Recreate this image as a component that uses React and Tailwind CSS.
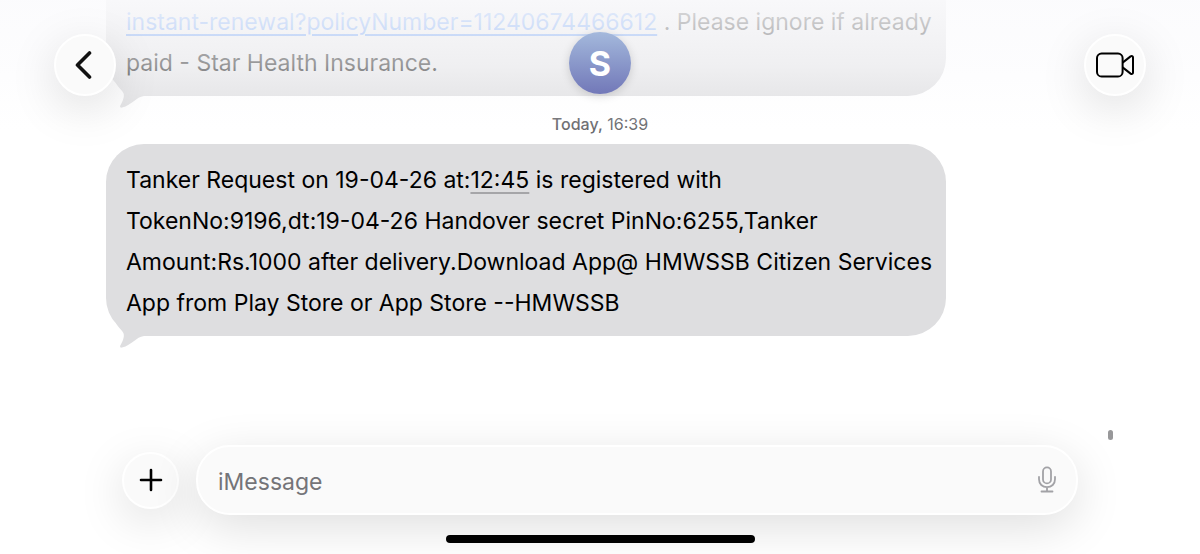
import React, { useState } from 'react';

const glass = 'border-2 border-white bg-[#fafafa] shadow-[0_12px_48px_rgba(0,0,0,0.13)]';

function BubbleTail() {
    return (
        <svg
            className="absolute -bottom-3 left-2 text-[#dedee0]"
            width="40"
            height="28"
            viewBox="0 0 40 28"
            fill="currentColor"
            aria-hidden="true"
        >
            <path d="M2 3 C4 7 7 9.500 8.800 12 C11 15 9.500 20 6.300 25.600 C5.600 27.300 6.600 28 8 27.600 C18 25 22 17 30 16 L40 16 L30 0 L4 0 Z" />
        </svg>
    );
}

function Bubble({ children, className = 'rounded-[38px] pt-4' }) {
    return (
        <div className={`relative w-[85%] bg-[#dedee0] pr-3 pb-3 pl-5 text-[23px] leading-[41px] text-black ${className}`}>
            {children}
            <BubbleTail />
        </div>
    );
}

function Header() {
    return (
        <header className="absolute inset-x-0 top-0 z-10 flex items-center justify-between bg-linear-to-b from-[#fbfbfd]/90 from-0% via-[#fbfbfd]/60 via-50% to-[#fbfbfd]/0 px-[54px] pt-8 pb-8">
            <button aria-label="Back" className={`flex size-[62px] items-center justify-center rounded-full ${glass}`}>
                <svg width="20" height="30" viewBox="0 0 20 30" fill="none" stroke="#111" strokeWidth="3.600" strokeLinecap="round" strokeLinejoin="round">
                    <path d="M14.500 3 L2.500 15 L14.500 27" />
                </svg>
            </button>
            <button
                aria-label="Contact details"
                className="mb-1 flex size-[62px] items-center justify-center rounded-full bg-linear-to-b from-[#a4b9dc] to-[#7278b8] text-[34px] font-bold text-white shadow-[0_2px_10px_rgba(0,0,0,0.15)]"
            >
                S
            </button>
            <button aria-label="Video call" className={`flex size-[62px] items-center justify-center rounded-full ${glass}`}>
                <svg width="38" height="26" viewBox="0 0 38 26" fill="none" stroke="#000" strokeWidth="2" strokeLinejoin="round">
                    <rect x="1" y="1.500" width="25.600" height="23" rx="4.600" />
                    <path d="M26.600 10.600 L34.600 4.400 C35.700 3.600 37 4 37 5.400 V20.600 C37 22 35.700 22.400 34.600 21.600 L26.600 15.400" />
                </svg>
            </button>
        </header>
    );
}

function Composer() {
    const [draft, setDraft] = useState('');

    return (
        <form className="flex items-center gap-[17px] px-[122px]" onSubmit={(e) => e.preventDefault()}>
            <button type="button" aria-label="Add attachment" className={`flex size-[57px] shrink-0 items-center justify-center rounded-full ${glass}`}>
                <svg width="24" height="24" viewBox="0 0 24 24" stroke="#000" strokeWidth="2.600" strokeLinecap="round">
                    <path d="M12 2 V22 M2 12 H22" />
                </svg>
            </button>
            <div className={`flex h-[70px] grow items-center rounded-[34px] px-5 ${glass}`}>
                <input
                    type="text"
                    aria-label="Message"
                    placeholder="iMessage"
                    value={draft}
                    onChange={(e) => setDraft(e.target.value)}
                    className="min-w-0 grow bg-transparent pt-1 text-[23px] text-black outline-none placeholder:text-[#747478]"
                />
                <button type="button" aria-label="Dictate">
                    <svg width="18" height="28" viewBox="0 0 18 28" fill="none" stroke="#a2a2a6" strokeWidth="1.800" strokeLinecap="round">
                        <rect x="5" y="1.400" width="8" height="16" rx="4" />
                        <path d="M1 10.800 V13.200 C1 18 4.400 21.200 9 21.200 C13.600 21.200 17 18 17 13.200 V10.800 M9 21.200 V25.500 M3.500 25.500 H14.500" />
                    </svg>
                </button>
            </div>
        </form>
    );
}

export default function App() {
    return (
        <div className="relative flex min-h-screen flex-col overflow-hidden bg-white font-['Inter','Liberation_Sans',sans-serif]">
            <Header />

            {/* Conversation */}
            <main className="px-[106px]">
                <Bubble className="rounded-b-[38px] pt-0.5">
                    <a href="#renewal" className="text-[#3f7fe8] underline decoration-2 underline-offset-4">
                        instant-renewal?policyNumber=11240674466612
                    </a>{' '}
                    . Please ignore if already paid - Star Health Insurance.
                </Bubble>
                <p className="pt-[18px] pb-2.5 text-center text-base leading-5 text-[#6a6a6e]">
                    <span className="font-medium">Today,</span> 16:39
                </p>
                <Bubble>
                    Tanker Request on 19-04-26 at:
                    <span className="underline decoration-[#a5a5a8] decoration-2 underline-offset-4">12:45</span> is registered with
                    TokenNo:9196,dt:19-04-26 Handover secret PinNo:6255,Tanker Amount:Rs.1000 after delivery.Download App@ HMWSSB
                    Citizen Services App from Play Store or App Store --HMWSSB
                </Bubble>
            </main>

            {/* Scroll indicator */}
            <div className="absolute right-[87px] bottom-[114px] h-2.5 w-[5px] rounded-full bg-[#98989a]" />

            <footer className="mt-auto flex flex-col gap-5 pb-[11px]">
                <Composer />
                {/* Home indicator */}
                <div className="mx-auto h-2 w-[309px] rounded-full bg-black" />
            </footer>
        </div>
    );
}
